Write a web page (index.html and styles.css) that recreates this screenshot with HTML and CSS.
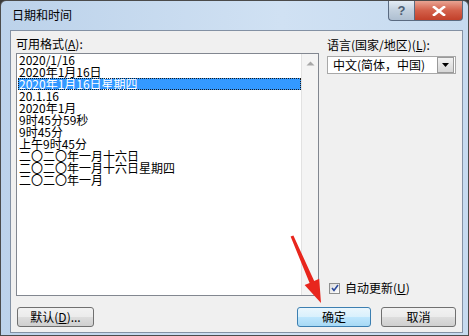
FILE: index.html
```html
<!DOCTYPE html>
<html lang="zh-CN">
<head>
    <meta charset="UTF-8">
    <title>日期和时间</title>
    <link rel="stylesheet" href="styles.css">
</head>
<body>
    <div class="window">
        <!-- Title bar -->
        <div class="titlebar">
            <span class="title">日期和时间</span>
            <div class="caption-buttons">
                <div class="cap-btn help">?</div>
                <div class="cap-btn close">
                    <svg width="14" height="10" viewBox="0 0 14 10">
                        <path d="M2 1 L12 9 M12 1 L2 9" stroke="#fff" stroke-width="2.6" stroke-linecap="square"/>
                    </svg>
                </div>
            </div>
        </div>

        <!-- Client area -->
        <div class="client">
            <div class="content">
                <div class="left-col">
                    <div class="label">可用格式(<u>A</u>):</div>
                    <div class="listbox">
                        <div class="items">
                            <div class="item">2020/1/16</div>
                            <div class="item">2020年1月16日</div>
                            <div class="item selected">2020年1月16日星期四</div>
                            <div class="item">20.1.16</div>
                            <div class="item">2020年1月</div>
                            <div class="item">9时45分59秒</div>
                            <div class="item">9时45分</div>
                            <div class="item">上午9时45分</div>
                            <div class="item">二〇二〇年一月十六日</div>
                            <div class="item">二〇二〇年一月十六日星期四</div>
                            <div class="item">二〇二〇年一月</div>
                        </div>
                        <div class="scrollbar">
                            <svg width="9" height="5" viewBox="0 0 9 5"><path d="M0.5 4.5 L4.5 0.5 L8.5 4.5 Z" fill="#a8a8a8"/></svg>
                        </div>
                    </div>
                </div>

                <div class="right-col">
                    <div>
                        <div class="label">语言(国家/地区)(<u>L</u>):</div>
                        <div class="combo">
                            <span class="combo-text">中文(简体，中国)</span>
                            <div class="combo-btn">
                                <svg width="7" height="4" viewBox="0 0 7 4"><path d="M0 0 L7 0 L3.5 4 Z" fill="#000"/></svg>
                            </div>
                        </div>
                    </div>
                    <div class="check-row">
                        <div class="checkbox">
                            <svg width="8" height="8" viewBox="0 0 8 8"><path d="M1 4 L3 6.5 L7 1" stroke="#2b4a9c" stroke-width="1.6" fill="none"/></svg>
                        </div>
                        <span>自动更新(<u>U</u>)</span>
                    </div>
                </div>
            </div>

            <div class="buttons">
                <button class="btn btn-default-fmt">默认(<u>D</u>)...</button>
                <div class="btn-group">
                    <button class="btn btn-ok">确定</button>
                    <button class="btn btn-cancel">取消</button>
                </div>
            </div>
        </div>

        <!-- Red pointer arrow drawn over the dialog -->
        <svg class="arrow" width="469" height="336" viewBox="0 0 469 336">
            <polygon points="290.6,236.6 293.4,235.4 314.2,280.9 319.2,278.7 321,303 304.6,285.1 309.6,282.9" fill="#e8261d"/>
        </svg>
    </div>
</body>
</html>
```

FILE: styles.css
```css
* {
    box-sizing: border-box;
}

body {
    margin: 0;
    background: #3a3a3a;
    font-family: "Noto Sans CJK SC", "Liberation Sans", sans-serif;
    font-size: 12px;
    color: #000;
}

.window {
    position: relative;
    width: 469px;
    height: 336px;
    border: 1px solid #4b4b4b;
    border-radius: 6px 6px 0 0;
    background: linear-gradient(to right, #bcd2ea, #d0e1f3 60%, #c6daef);
    display: flex;
    flex-direction: column;
    overflow: hidden;
}

/* Title bar */
.titlebar {
    height: 29px;
    display: flex;
    align-items: flex-start;
    padding-left: 11px;
}

.title {
    margin-top: 7px;
    line-height: 14px;
    font-size: 12px;
}

.caption-buttons {
    margin-left: auto;
    margin-right: 5px;
    display: flex;
}

.cap-btn {
    height: 20px;
    border: 1px solid #5a6a80;
    border-top: none;
    display: flex;
    align-items: center;
    justify-content: center;
}

.help {
    width: 26px;
    border-right: none;
    border-radius: 0 0 0 4px;
    background: linear-gradient(#e4ecf4, #c2d0de 50%, #aebfd1);
    color: #4c5e74;
    font-family: "Liberation Sans", sans-serif;
    font-weight: bold;
    font-size: 13px;
}

.close {
    width: 49px;
    border-radius: 0 0 4px 0;
    background: linear-gradient(#e8a493, #d3604a 50%, #c2402a);
}

/* Client area */
.client {
    flex: 1;
    margin: 0 5px 2px 9px;
    border: 1px solid #8391a4;
    background: #f0f0f0;
    padding: 5px 6px 0 5px;
    display: flex;
    flex-direction: column;
}

.content {
    display: flex;
    gap: 8px;
}

.label {
    line-height: 16px;
}

.left-col {
    width: 303px;
}

.listbox {
    margin-top: 1px;
    height: 243px;
    border: 1px solid #828790;
    background: #fff;
    display: flex;
}

.items {
    flex: 1;
}

.item {
    line-height: 12px;
    height: 12px;
    padding-left: 1px;
    margin-left: 1px;
    white-space: nowrap;
}

.item.selected {
    background: #3399ff;
    color: #fff;
    outline: 1px dotted #1a1a1a;
    outline-offset: -1px;
}

.scrollbar {
    width: 17px;
    background: #f4f4f4;
    border-left: 1px solid #e2e2e2;
    display: flex;
    justify-content: center;
    padding-top: 7px;
}

.right-col {
    flex: 1;
    display: flex;
    flex-direction: column;
    justify-content: space-between;
    padding-top: 1px;
}

.combo {
    margin-top: 3px;
    height: 18px;
    border: 1px solid #a8a8a8;
    background: #fff;
    display: flex;
    align-items: center;
    padding-left: 5px;
}

.combo-text {
    flex: 1;
    line-height: 14px;
}

.combo-btn {
    width: 17px;
    height: 16px;
    margin-right: 1px;
    border: 1px solid #9a9a9a;
    background: linear-gradient(#f2f2f2, #d6d6d6);
    display: flex;
    align-items: center;
    justify-content: center;
}

.check-row {
    display: flex;
    align-items: center;
    gap: 5px;
    padding-left: 2px;
    margin-bottom: 1px;
    line-height: 14px;
}

.checkbox {
    width: 11px;
    height: 11px;
    border: 1px solid #8e8f8f;
    background: linear-gradient(135deg, #dcdcdc, #fff);
    display: flex;
    align-items: center;
    justify-content: center;
}

/* Bottom buttons */
.buttons {
    margin-top: 11px;
    display: flex;
    justify-content: space-between;
}

.btn-group {
    display: flex;
    gap: 10px;
}

.btn {
    height: 20px;
    padding: 0;
    border: 1px solid #707070;
    border-radius: 3px;
    background: linear-gradient(#f2f2f2, #ebebeb 50%, #dddddd 51%, #cfcfcf);
    font-family: inherit;
    font-size: 12px;
    line-height: 16px;
    color: #000;
}

.btn-default-fmt {
    width: 77px;
    margin-left: 1px;
}

.btn-ok {
    width: 74px;
    border-color: #3c7fb1;
    background: linear-gradient(#eaf6fd, #d9f0fc 50%, #bee6fd 51%, #a7d9f5);
}

.btn-cancel {
    width: 75px;
}

.arrow {
    position: absolute;
    left: -1px;
    top: -1px;
    pointer-events: none;
}
```
